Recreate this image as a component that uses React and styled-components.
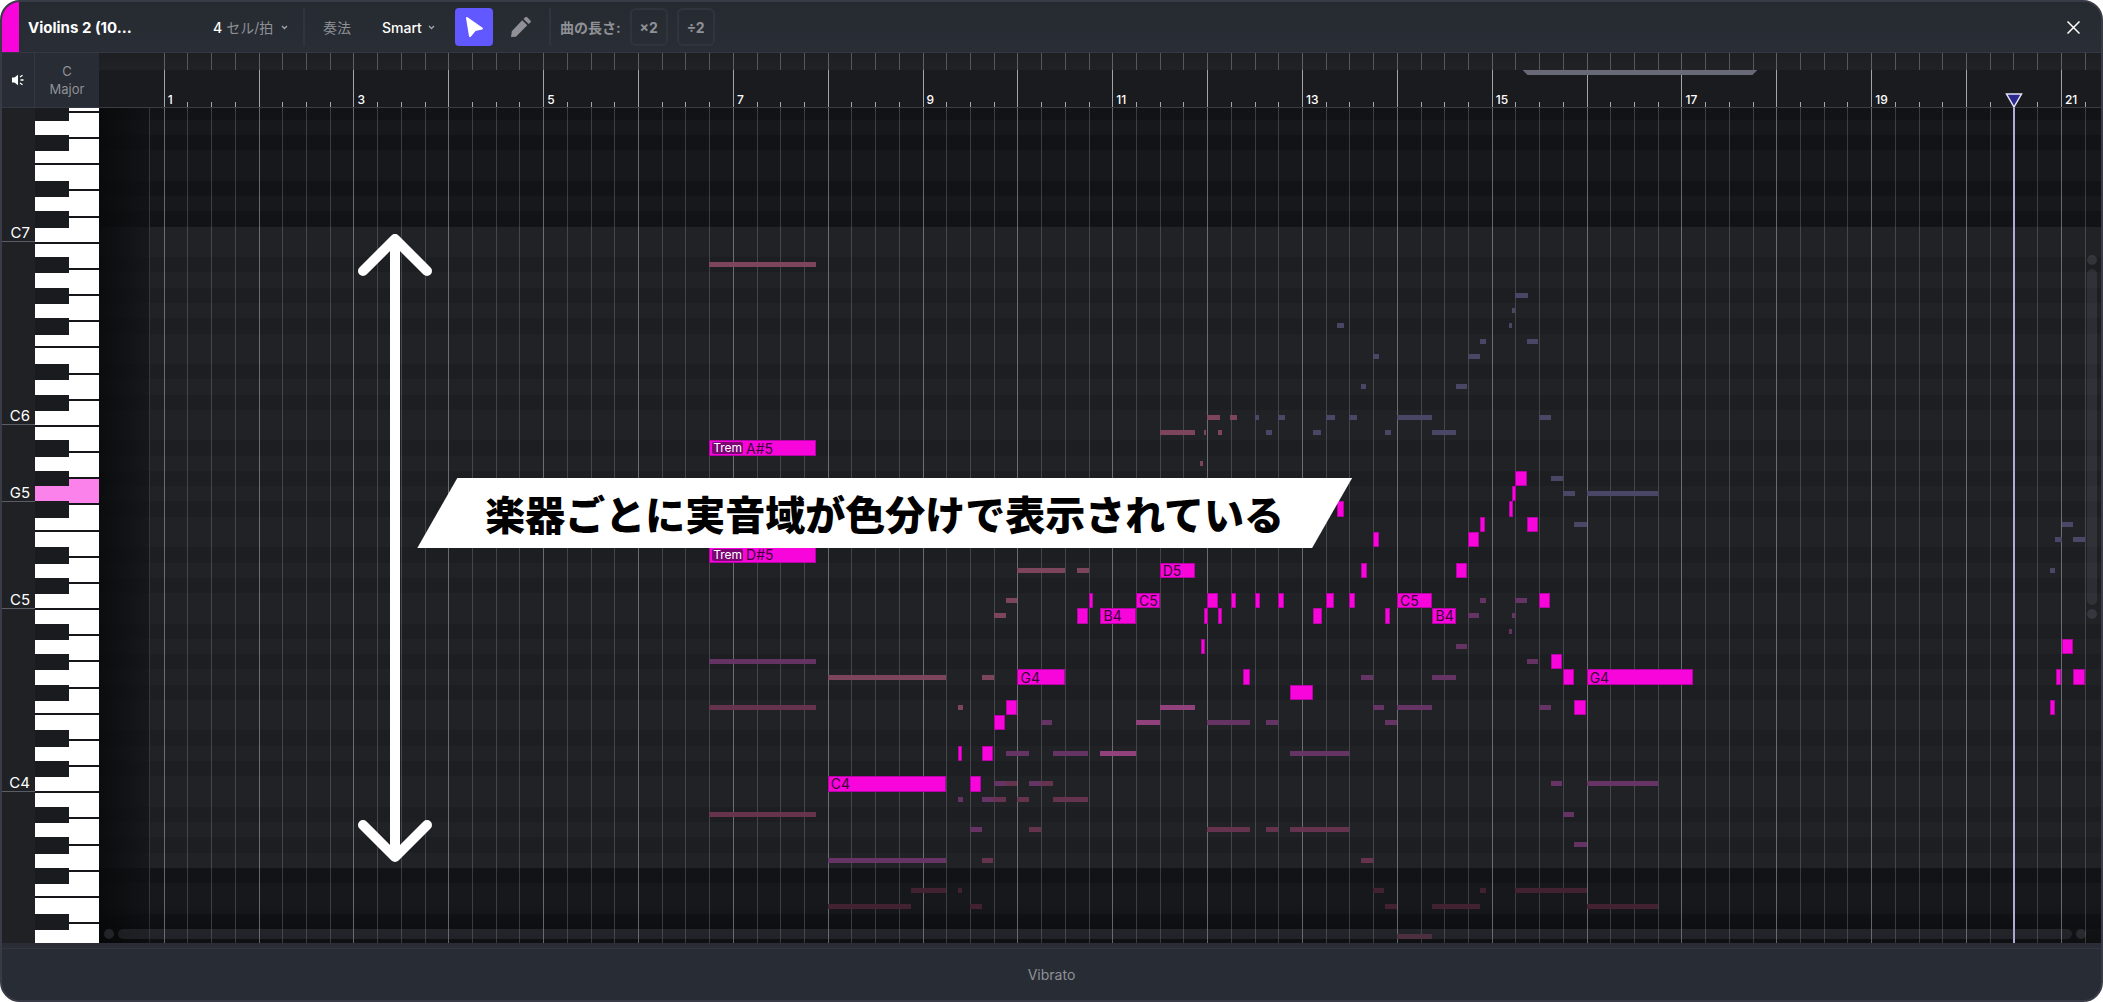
import React from 'react';
import styled, { createGlobalStyle } from 'styled-components';

const GlobalStyle = createGlobalStyle`
    * { box-sizing: border-box; }
    body {
        margin: 0;
        background: #fff;
        font-family: Inter, "Noto Sans CJK JP", sans-serif;
    }
    button, select { font: inherit; color: inherit; }
`

// time axis, in beats
const BEATS = 84.42;
const LEAD = 2.73;
const beatLeft = (beat) => `${((beat + LEAD) / BEATS) * 100}%`;
const beatWidth = (beats) => `${(beats / BEATS) * 100}%`;

// pitch axis, one lane for each semitone, the outer two are cut off
const TOP_PITCH = 104;
const LOW_PITCH = 50;
const TOP_PART = 0.773;
const LOW_PART = 0.92;
const LANE_COUNT = TOP_PITCH - LOW_PITCH - 1 + TOP_PART + LOW_PART;
const pitchTop = (pitch) => `${((TOP_PITCH - pitch - 1 + TOP_PART) / LANE_COUNT) * 100}%`;
const laneHeight = `${100 / LANE_COUNT}%`;

const RANGE_TOP = 96;
const RANGE_LOW = 55;
const ACTIVE_PITCH = 79;

const isBlack = (pitch) => [1, 3, 6, 8, 10].includes(pitch % 12);
const laneSize = (pitch) => {
    if (pitch === TOP_PITCH) return TOP_PART;
    if (pitch === LOW_PITCH) return LOW_PART;
    return 1;
};

const lanes = [];
for (let p = TOP_PITCH; p >= LOW_PITCH; p--) lanes.push(p);

const labels = { 96: 'C7', 84: 'C6', 79: 'G5', 72: 'C5', 60: 'C4' };

// the wide ends of the white keys are all 12/7 of a lane
const WHITE = 12 / 7;
const whiteKeys = [TOP_PART + 8 - WHITE * 5];
for (let i = 0; i < 31; i++) whiteKeys.push(WHITE);
whiteKeys.push(LANE_COUNT - whiteKeys[0] - WHITE * 31);
const ACTIVE_WHITE = 15;

const beats = [];
for (let b = 0; b <= 81; b++) beats.push(b);

// [start, length, pitch, name, articulation]
const notes = [
    [23, 4.5, 82, 'A#5', 'Trem'], [23, 4.5, 75, 'D#5', 'Trem'], [28, 5, 60, 'C4'],
    [33.5, 0.16, 62], [34, 0.47, 60], [34.5, 0.47, 62], [35, 0.47, 64], [35.5, 0.47, 65],
    [36, 2, 67, 'G4'], [38.5, 0.47, 71], [39, 0.2, 72], [39.5, 1.5, 71, 'B4'],
    [41, 1, 72, 'C5'], [42, 1.5, 74, 'D5'], [43.72, 0.12, 69], [43.86, 0.12, 71],
    [44, 0.47, 72], [44.47, 0.14, 71], [45, 0.2, 72], [45.5, 0.3, 67], [46, 0.23, 72],
    [47, 0.23, 72], [47.5, 0.97, 66], [48.48, 0.36, 71], [49, 0.35, 72], [49.48, 0.27, 78],
    [50, 0.22, 72], [50.5, 0.22, 74], [51, 0.25, 76], [51.5, 0.22, 71],
    [52, 1.48, 72, 'C5'], [53.5, 1, 71, 'B4'], [54.5, 0.47, 74], [55, 0.47, 76], [55.5, 0.23, 77],
    [56.72, 0.11, 78], [56.85, 0.11, 79], [57, 0.5, 80], [57.5, 0.47, 77], [58, 0.47, 72],
    [58.5, 0.47, 68], [59, 0.47, 67], [59.47, 0.5, 65], [60, 4.48, 67, 'G4'],
    [79.56, 0.2, 65], [79.78, 0.22, 67], [80.05, 0.45, 69], [80.52, 0.5, 67],
];

const ghostColors = {
    purple: '#693567',
    rose: '#82485f',
    wine: '#69354f',
    blue: '#4c4969',
    pink: '#98437f',
    dark: '#452231',
};

// notes of the other instruments: [start, length, pitch]
const ghosts = {
    rose: [
        [23, 4.5, 94], [28, 5, 67], [34.5, 0.5, 67], [35, 0.5, 71], [35.5, 0.5, 72], [36, 2, 74],
        [38.5, 0.5, 74], [33.5, 0.2, 65], [42, 1.5, 83], [43.7, 0.14, 81], [43.85, 0.12, 83],
        [44, 0.53, 84], [44.47, 0.17, 83], [44.97, 0.27, 84],
    ],
    pink: [[39.5, 1.5, 62], [41, 1, 64], [42, 1.5, 65]],
    purple: [
        [23, 4.5, 68], [37, 0.47, 64], [35.5, 1, 62], [37.5, 1.47, 62], [35, 0.5, 60], [36.5, 0.5, 60],
        [33.5, 0.2, 59], [34.5, 0.5, 59], [34, 0.5, 57], [28, 5, 55], [44, 1.8, 64], [46.5, 0.5, 64],
        [47.5, 2.47, 62], [50.5, 0.5, 67], [51, 0.47, 65], [51.5, 0.5, 64], [52, 1.48, 65], [53.5, 1, 67],
        [54.5, 0.47, 69], [55, 0.47, 71], [55.5, 0.25, 72], [56.72, 0.12, 70], [56.86, 0.12, 71],
        [57, 0.5, 72], [57.5, 0.47, 68], [58, 0.5, 65], [58.5, 0.47, 60], [59, 0.47, 58], [59.47, 0.53, 56],
        [60, 3, 60],
    ],
    wine: [
        [23, 4.5, 65], [23, 4.5, 58], [35.5, 0.5, 60], [37, 0.5, 60], [35, 0.5, 59], [36, 0.47, 59],
        [37.5, 1.47, 59], [36.5, 0.5, 57], [34.5, 0.47, 55], [44, 1.8, 57], [46.5, 0.5, 57], [47.5, 2.47, 57],
        [50.5, 0.5, 55],
    ],
    dark: [
        [31.5, 1.5, 53], [33.5, 0.17, 53], [28, 3.5, 52], [34, 0.5, 52], [51, 0.47, 53], [51.5, 0.5, 52],
        [53.5, 2, 52], [55.5, 0.25, 53], [57, 3, 53], [60, 3, 52], [52, 1.48, 50],
    ],
    blue: [
        [57, 0.53, 92], [56.86, 0.13, 91], [56.72, 0.12, 90], [49.48, 0.28, 90], [55.5, 0.25, 89],
        [57.5, 0.47, 89], [51, 0.25, 88], [55, 0.5, 88], [50.48, 0.22, 86], [54.5, 0.47, 86],
        [46, 0.2, 84], [47, 0.27, 84], [49, 0.37, 84], [50, 0.33, 84], [52, 1.47, 84], [58, 0.48, 84],
        [46.5, 0.23, 83], [48.47, 0.33, 83], [51.5, 0.23, 83], [53.5, 1, 83], [58.5, 0.5, 80],
        [59, 0.5, 79], [60, 3, 79], [59.47, 0.53, 77],
        [80.05, 0.45, 77], [79.76, 0.3, 76], [80.5, 0.53, 76], [79.54, 0.22, 74],
    ],
};

const Editor = styled.main`
    position: relative;
    display: flex;
    flex-direction: column;
    min-height: 100vh;
    border: 2px solid #393c46;
    border-radius: 20px;
    background: #282c34;
    overflow: hidden;
`

const Header = styled.header`
    display: flex;
    align-items: center;
    height: 51px;
    border-bottom: 1px solid #353842;
    background: linear-gradient(#262b31, #292d35);
    color: #8f9196;
    font-size: 14px;
`
const TrackColor = styled.div`
    align-self: stretch;
    width: 17px;
    background: #f805dc;
`
const TrackName = styled.h1`
    width: 186px;
    margin: 0;
    padding-left: 9px;
    color: #fff;
    font-size: 15px;
    font-weight: 700;
    white-space: nowrap;
`
const CellButton = styled.button`
    display: flex;
    align-items: center;
    gap: 4px;
    padding: 0;
    margin-left: 8px;
    width: 90px;
    border: 0;
    background: none;
    white-space: nowrap;
    cursor: pointer;

    b {
        color: #fff;
        font-weight: 500;
    }
    svg {
        margin-left: 4px;
    }
`
const Divider = styled.div`
    width: 2px;
    height: 38px;
    background: #31343e;
`
const Field = styled.label`
    display: flex;
    align-items: center;
    gap: 31px;
    padding-left: 18px;
`
const SelectBox = styled.span`
    display: flex;
    align-items: center;
    width: 73px;
    color: #fff;

    select {
        appearance: none;
        width: 46px;
        padding: 0;
        border: 0;
        background: none;
        font-weight: 500;
    }
`
const ToolButton = styled.button`
    display: flex;
    align-items: center;
    justify-content: center;
    width: 38px;
    height: 38px;
    margin-right: 9px;
    padding: 0;
    border: 0;
    border-radius: 4px;
    background: ${props => props.$on ? '#6158ff' : 'none'};
    cursor: pointer;
`
const LengthLabel = styled.span`
    padding: 0 9px;
    font-weight: 700;
`
const ScaleButton = styled.button`
    width: 38px;
    height: 38px;
    margin-right: 9px;
    padding: 0;
    border: 2px solid #31343d;
    border-radius: 6px;
    background: none;
    font-weight: 700;
    cursor: pointer;
`
const CloseButton = styled.button`
    display: flex;
    margin-left: auto;
    margin-right: 17px;
    padding: 4px;
    border: 0;
    background: none;
    cursor: pointer;
`

const Body = styled.section`
    flex: 1;
    display: grid;
    grid-template-columns: 33px 64px minmax(0, 1fr);
    grid-template-rows: 55px minmax(400px, 1fr);
`
const MuteButton = styled.button`
    display: flex;
    align-items: center;
    justify-content: center;
    padding: 0;
    border: 0;
    border-right: 1px solid #353842;
    border-bottom: 1px solid #353842;
    background: none;
    cursor: pointer;
`
const ScaleName = styled.button`
    padding: 0;
    border: 0;
    border-bottom: 1px solid #353842;
    background: none;
    color: #8f9196;
    font-size: 13px;
    line-height: 18px;
    cursor: pointer;
`

const Ruler = styled.div`
    position: relative;
    border-bottom: 1px solid #3a3c42;
    background: linear-gradient(#1e1f23, #212226 17px, #1a1b1f 17px);
`
const Tick = styled.i`
    position: absolute;
    top: 0;
    bottom: 0;
    width: 1px;
    background: ${props => props.$bar
        ? 'linear-gradient(#606166 17px, #a5a6a9 17px)'
        : 'linear-gradient(#56575c 17px, transparent 17px, transparent 49px, #a5a6a9 49px)'};
`
const BarNumber = styled.span`
    position: absolute;
    bottom: 0;
    padding-left: 4px;
    color: #fff;
    font-size: 12px;
    font-weight: 500;
    line-height: 14px;
`
const Region = styled.div`
    position: absolute;
    top: 17px;
    height: 5px;
    background: #696a78;
    clip-path: polygon(0 0, 100% 0, calc(100% - 5px) 100%, 5px 100%);
`
const Marker = styled.svg`
    position: absolute;
    bottom: -1px;
    margin-left: -8px;
`

const Labels = styled.div`
    display: flex;
    flex-direction: column;
    background: #1f2125;
    color: #fff;
    font-size: 15px;
    line-height: 14px;
`
const Label = styled.div`
    flex: ${props => props.$size} 0 0;
    min-height: 0;
    padding-right: 5px;
    border-bottom: ${props => props.$line ? '1px solid #5a5c66' : '0'};
    text-align: right;
`
const Keyboard = styled.div`
    position: relative;
    overflow: hidden;
`
const KeyColumn = styled.div`
    display: flex;
    flex-direction: column;
    height: 100%;
`
const BlackColumn = styled.div`
    position: absolute;
    top: 0;
    bottom: 0;
    left: 0;
    display: flex;
    flex-direction: column;
    width: 34px;
    pointer-events: none;
`
const WhiteKey = styled.button`
    flex: ${props => props.$size} 0 0;
    min-height: 0;
    padding: 0;
    border: 0;
    border-bottom: ${props => props.$last ? '0' : '2px solid #15151a'};
    background: ${props => props.$on ? '#fb82ea' : '#fff'};
`
const NarrowKey = styled.div`
    flex: ${props => props.$size} 0 0;
    min-height: 0;
    background: ${props => props.$black ? '#1a1b1e' : props.$on ? '#fb82ea' : 'none'};
    box-shadow: ${props => props.$black ? '0 1px 0 #1a1b1e' : 'none'};
`

const Roll = styled.div`
    position: relative;
    overflow: hidden;
    background: #1d1f22;
`
const Lanes = styled.div`
    display: flex;
    flex-direction: column;
    height: 100%;
`
const Lane = styled.div`
    flex: ${props => props.$size} 0 0;
    background: ${props => {
        if (props.$out) return props.$black ? '#121316' : '#16181b';
        return props.$black ? '#1c1e21' : '#212226';
    }};
`
const GridLine = styled.i`
    position: absolute;
    top: 0;
    bottom: 0;
    width: 1px;
    background: ${props => props.$bar ? 'rgba(190, 192, 205, 0.48)' : 'rgba(190, 192, 205, 0.24)'};
`
const LeadIn = styled.div`
    position: absolute;
    top: 0;
    bottom: 0;
    left: 0;
    width: 51px;
    border-right: 1px solid #36373d;
    background: linear-gradient(90deg, rgba(8, 9, 10, 0.85), rgba(14, 16, 19, 0.55));
`
const BottomShade = styled.div`
    position: absolute;
    right: 0;
    bottom: 0;
    left: 0;
    height: 40px;
    background: linear-gradient(transparent, rgba(0, 0, 0, 0.35));
`
const Ghost = styled.div`
    position: absolute;
    display: flex;
    align-items: center;

    &::before {
        content: "";
        width: 100%;
        height: 5px;
        background: ${props => ghostColors[props.$kind]};
        opacity: 0.95;
    }
`
const Note = styled.div`
    position: absolute;
    display: flex;
    align-items: center;
    gap: 3px;
    padding-left: 2px;
    border: 1px solid #b404a5;
    background: #f805dc;
    color: #3a0436;
    font-size: 14px;
    line-height: 13px;
    white-space: nowrap;
`
const NoteTag = styled.span`
    padding: 0 1px;
    border-radius: 2px;
    background: #7d0675;
    color: #fff;
    font-size: 12px;
    line-height: 12px;
`
const Playhead = styled.i`
    position: absolute;
    top: 0;
    bottom: 0;
    width: 2px;
    background: #aeadd6;
`
const HScroll = styled.div`
    position: absolute;
    right: 15px;
    bottom: 4px;
    left: 5px;
    display: flex;
    gap: 4px;
`
const VScroll = styled.div`
    position: absolute;
    top: 17.6%;
    right: 4px;
    height: 43.6%;
    display: flex;
    flex-direction: column;
    gap: 4px;
`
const ScrollDot = styled.i`
    width: 10px;
    height: 10px;
    border-radius: 5px;
    background: rgba(140, 140, 160, 0.2);
`
const ScrollThumb = styled.i`
    flex: 1;
    min-height: 9px;
    border-radius: 5px;
    background: rgba(140, 140, 160, 0.15);
`

const Arrow = styled.svg`
    position: absolute;
    left: 12.9%;
    width: 76px;
    fill: none;
    stroke: #fff;
    stroke-width: 10;
    stroke-linecap: round;
    stroke-linejoin: round;
    overflow: visible;
`
const Caption = styled.p`
    position: absolute;
    top: 44.3%;
    left: 15.9%;
    margin: 0;
    padding: 0 68px;
    background: #fff;
    color: #000;
    font-family: "Noto Sans CJK JP", sans-serif;
    font-size: 40px;
    font-weight: 900;
    line-height: 70px;
    white-space: nowrap;
    clip-path: polygon(40px 0, 100% 0, calc(100% - 40px) 100%, 0 100%);
`

const Footer = styled.footer`
    display: flex;
    align-items: center;
    justify-content: center;
    height: 57px;
    border-top: 5px solid #2a2d36;
    box-shadow: inset 0 1px 0 #343741;
    color: #8f9196;
    font-size: 14px;
`

const Chevron = () => (
    <svg width="7" height="5" viewBox="0 0 7 5" fill="none" stroke="#a3a5ab" strokeWidth="1.3">
        <path d="M1 1l2.5 2.5L6 1" />
    </svg>
)

const App = () => {
    return (
        <>
            <GlobalStyle />
            <Editor>
                <Header>
                    <TrackColor />
                    <TrackName>Violins 2 (10...</TrackName>
                    <CellButton type="button">
                        <b>4</b> セル/拍 <Chevron />
                    </CellButton>
                    <Divider />
                    <Field>
                        奏法
                        <SelectBox>
                            <select defaultValue="Smart">
                                <option>Smart</option>
                            </select>
                            <Chevron />
                        </SelectBox>
                    </Field>
                    <ToolButton type="button" $on aria-label="Select">
                        <svg width="20" height="22" viewBox="0 0 20 22" fill="#fff" stroke="#fff" strokeWidth="2" strokeLinejoin="round">
                            <path d="M3 2L18 12.500L11 14L6 20Z" />
                        </svg>
                    </ToolButton>
                    <ToolButton type="button" aria-label="Draw">
                        <svg width="22" height="22" viewBox="0 0 22 22" fill="#8f9196">
                            <path d="M1 21L1.800 15.200L12.200 4.300L17.300 9.300L6.700 19.900Q6 20.700 5 20.800Z" />
                            <path d="M13.500 3L15.200 1.300Q16.200 .4 17.200 1.300L20.400 4.500Q21.300 5.500 20.400 6.400L18.600 8.100Z" />
                        </svg>
                    </ToolButton>
                    <Divider />
                    <LengthLabel>曲の長さ:</LengthLabel>
                    <ScaleButton type="button">×2</ScaleButton>
                    <ScaleButton type="button">÷2</ScaleButton>
                    <CloseButton type="button" aria-label="Close">
                        <svg width="13" height="13" viewBox="0 0 13 13" stroke="#fff" strokeWidth="1.500">
                            <path d="M.5 .5l12 12M12.500 .5l-12 12" />
                        </svg>
                    </CloseButton>
                </Header>

                <Body>
                    <MuteButton type="button" aria-label="Preview sound">
                        <svg width="12" height="12" viewBox="0 0 12 12" fill="#fff" stroke="#fff">
                            <path d="M0 3.500h2.500L6 .8v10.400L2.500 8.500H0z" stroke="none" />
                            <path d="M8 3l2.500-1.700M8.500 6H11.500M8 9l2.500 1.700" fill="none" strokeWidth="1.300" />
                        </svg>
                    </MuteButton>
                    <ScaleName type="button">C<br />Major</ScaleName>

                    <Ruler>
                        {beats.map(b => (
                            <Tick key={b} $bar={b % 4 === 0} style={{ left: beatLeft(b) }} />
                        ))}
                        {beats.filter(b => b % 8 === 0).map(b => (
                            <BarNumber key={b} style={{ left: beatLeft(b) }}>{b / 4 + 1}</BarNumber>
                        ))}
                        <Region style={{ left: beatLeft(57.3), width: beatWidth(9.9) }} />
                        <Marker width="18" height="15" viewBox="0 0 18 15" style={{ left: beatLeft(78) }}>
                            <path d="M1.500 1H16.500L9 14Z" fill="#2c2a8e" stroke="#e2e1f5" strokeWidth="1.500" />
                        </Marker>
                    </Ruler>

                    <Labels>
                        {lanes.map(p => (
                            <Label key={p} $size={laneSize(p)} $line={labels[p]}>{labels[p]}</Label>
                        ))}
                    </Labels>

                    <Keyboard>
                        <KeyColumn>
                            {whiteKeys.map((size, i) => (
                                <WhiteKey
                                    key={i}
                                    type="button"
                                    aria-label={`Key ${i + 1}`}
                                    $size={size}
                                    $on={i === ACTIVE_WHITE}
                                    $last={i === whiteKeys.length - 1}
                                />
                            ))}
                        </KeyColumn>
                        <BlackColumn>
                            {lanes.map(p => (
                                <NarrowKey key={p} $size={laneSize(p)} $black={isBlack(p)} $on={p === ACTIVE_PITCH} />
                            ))}
                        </BlackColumn>
                    </Keyboard>

                    <Roll>
                        <Lanes>
                            {lanes.map(p => (
                                <Lane
                                    key={p}
                                    $size={laneSize(p)}
                                    $black={isBlack(p)}
                                    $out={p > RANGE_TOP || p < RANGE_LOW}
                                />
                            ))}
                        </Lanes>
                        <LeadIn />
                        <BottomShade />
                        {beats.map(b => (
                            <GridLine key={b} $bar={b % 4 === 0} style={{ left: beatLeft(b) }} />
                        ))}
                        {Object.keys(ghosts).map(kind => ghosts[kind].map(([start, length, pitch]) => (
                            <Ghost
                                key={`${kind}-${start}-${pitch}`}
                                $kind={kind}
                                style={{
                                    left: beatLeft(start),
                                    top: pitchTop(pitch),
                                    width: beatWidth(length),
                                    height: laneHeight,
                                }}
                            />
                        )))}
                        {notes.map(([start, length, pitch, name, tag]) => (
                            <Note
                                key={`${start}-${pitch}`}
                                style={{
                                    left: beatLeft(start),
                                    top: pitchTop(pitch),
                                    width: beatWidth(length),
                                    height: laneHeight,
                                }}
                            >
                                {tag && <NoteTag>{tag}</NoteTag>}
                                {name}
                            </Note>
                        ))}
                        <Playhead style={{ left: beatLeft(78) }} />
                        <HScroll><ScrollDot /><ScrollThumb /><ScrollDot /></HScroll>
                        <VScroll><ScrollDot /><ScrollThumb /><ScrollDot /></VScroll>
                        <Arrow
                            height="628"
                            viewBox="0 0 76 628"
                            style={{ top: pitchTop(RANGE_TOP - 0.45) }}
                        >
                            <path d="M38 5V623M6 37L38 5L70 37M6 591L38 623L70 591" />
                        </Arrow>
                        <Caption>楽器ごとに実音域が色分けで表示されている</Caption>
                    </Roll>
                </Body>

                <Footer>Vibrato</Footer>
            </Editor>
        </>
    )
}

export default App;
